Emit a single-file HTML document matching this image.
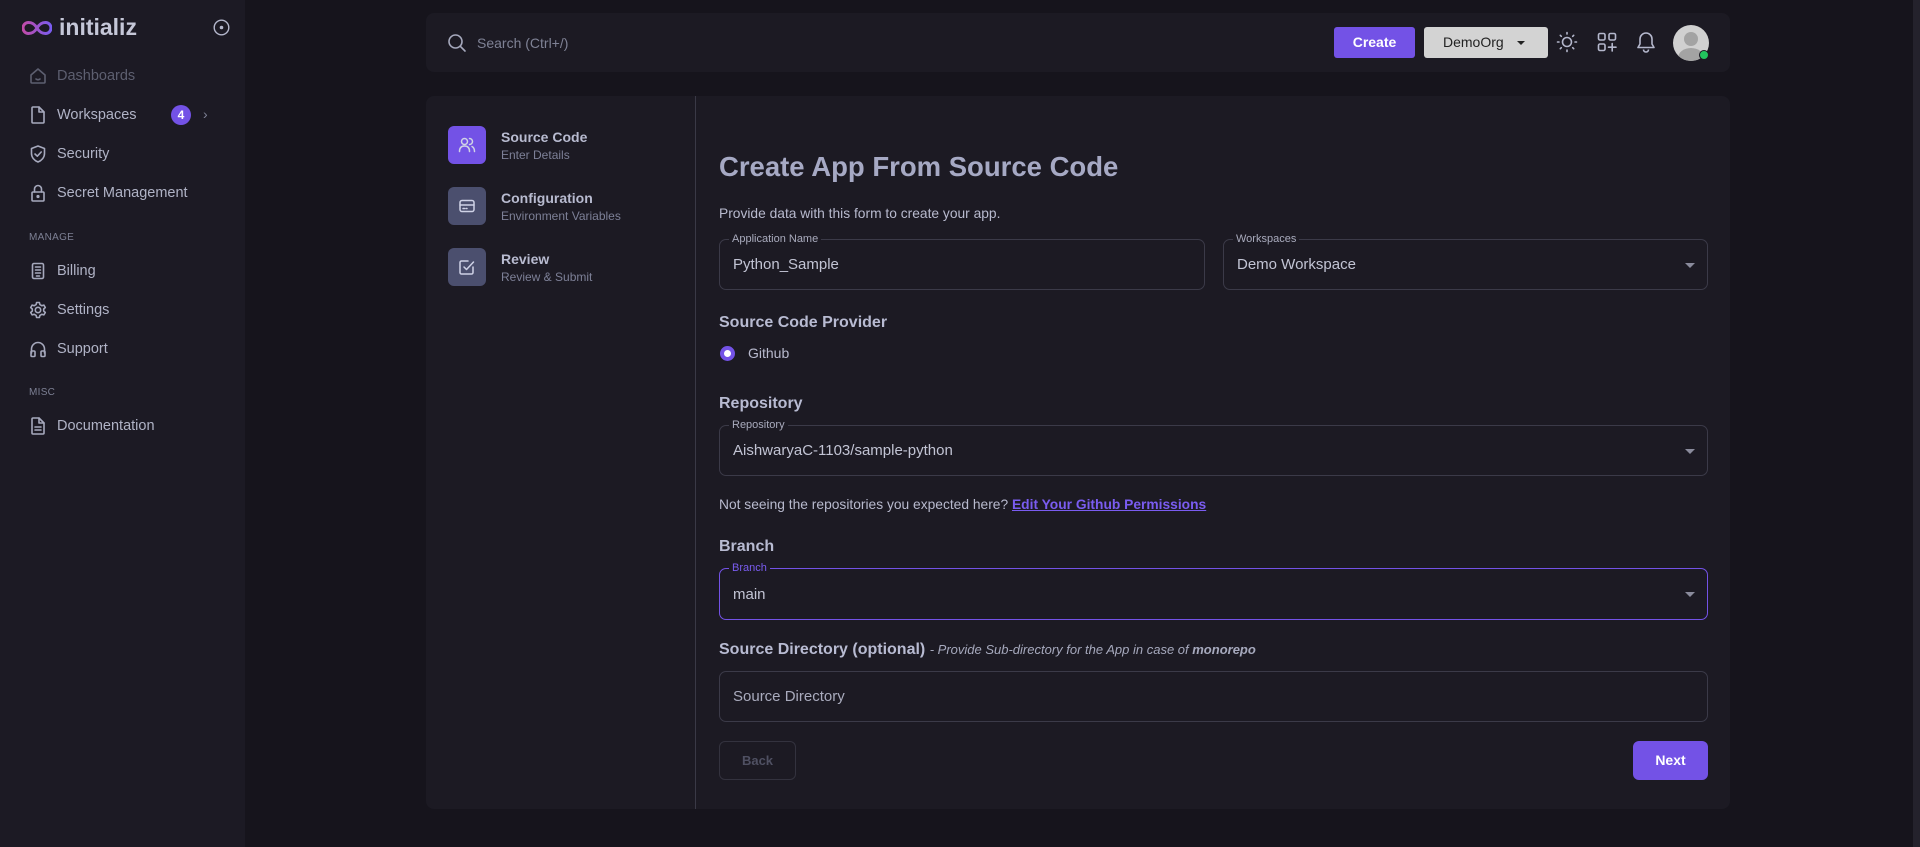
<!DOCTYPE html>
<html><head><meta charset="utf-8"><style>
*{box-sizing:border-box;margin:0;padding:0}
body{width:1920px;height:847px;background:#16141c;font-family:"Liberation Sans",sans-serif;color:#b4b7cc;position:relative;overflow:hidden}
.abs{position:absolute}
.side{left:0;top:0;width:245px;height:847px;background:#1c1a24}
.nav{position:absolute;left:28px;display:flex;align-items:center;font-size:14.5px;color:#b0b3c6}
.nav svg{width:20px;height:20px;margin-right:9px;fill:none;stroke:#a6a9bd;stroke-width:1.6;stroke-linecap:round;stroke-linejoin:round}
.sec{position:absolute;left:29px;font-size:10px;color:#7d8094;letter-spacing:.3px}
.card{background:#1c1a23;border-radius:8px}
.step{position:absolute;left:448px;display:flex;align-items:center}
.step .ic{width:38px;height:38px;border-radius:6px;background:#4b4f6e;display:flex;align-items:center;justify-content:center;margin-right:15px}
.step .ic svg{width:20px;height:20px;fill:none;stroke:#cfd2e6;stroke-width:1.5;stroke-linecap:round;stroke-linejoin:round}
.step b{display:block;font-size:14px;color:#b8bbd0}
.step span{display:block;font-size:12px;color:#7d8097;margin-top:3px}
.field{position:absolute;border:1px solid #3b3a48;border-radius:7px;font-size:15px;color:#c2c4d4;padding-left:13px;display:flex;align-items:center}
.field .lb{position:absolute;top:-8px;left:9px;background:#1c1a23;padding:0 3px;font-size:11px;color:#a9abbd;line-height:14px}
.caret{position:absolute;right:12px;top:50%;margin-top:-2px;border-left:5px solid transparent;border-right:5px solid transparent;border-top:5px solid #8a8b9c}
h3{position:absolute;font-size:16px;font-weight:bold;color:#b8bbd2}
</style></head><body>
<div class="abs side">
  <svg class="abs" style="left:22px;top:20px" width="30" height="16" viewBox="0 0 30 16"><defs><linearGradient id="g" x1="0" x2="1"><stop offset="0" stop-color="#c04ba8"/><stop offset="1" stop-color="#7a5cf0"/></linearGradient></defs><path d="M15 8C12 3 9 2.5 6.5 2.5A5.5 5.5 0 0 0 6.5 13.5C9 13.5 12 13 15 8C18 3 21 2.5 23.5 2.5A5.5 5.5 0 0 1 23.5 13.5C21 13.5 18 13 15 8Z" fill="none" stroke="url(#g)" stroke-width="3"/></svg>
  <div class="abs" style="left:59px;top:14px;font-size:23px;font-weight:bold;color:#c5c7d8">initializ</div>
  <svg class="abs" style="left:213px;top:19px" width="17" height="17" viewBox="0 0 17 17"><circle cx="8.5" cy="8.5" r="7.3" fill="none" stroke="#b4b7cc" stroke-width="1.4"/><circle cx="8.5" cy="8.5" r="1.8" fill="#b4b7cc"/></svg>
  <div class="nav" style="top:66px;color:#5d5f70"><svg viewBox="0 0 20 20" style="stroke:#5d5f70"><path d="M3 9L10 3L17 9V16A1 1 0 0 1 16 17H4A1 1 0 0 1 3 16Z"/><path d="M8 13Q10 14.5 12 13"/></svg>Dashboards</div>
  <div class="nav" style="top:105px"><svg viewBox="0 0 20 20"><path d="M5 2H11L16 7V17A1 1 0 0 1 15 18H5A1 1 0 0 1 4 17V3A1 1 0 0 1 5 2Z"/><path d="M11 2V7H16"/></svg>Workspaces</div>
  <div class="abs" style="left:171px;top:105px;width:20px;height:20px;border-radius:50%;background:#7352e6;color:#fff;font-size:12px;font-weight:bold;text-align:center;line-height:20px">4</div>
  <div class="abs" style="left:203px;top:106px;font-size:14px;color:#7d8094">›</div>
  <div class="nav" style="top:144px"><svg viewBox="0 0 20 20"><path d="M10 2L16.5 4.5V9.5C16.5 13.5 13.5 16.5 10 18C6.5 16.5 3.5 13.5 3.5 9.5V4.5Z"/><path d="M7 10L9.3 12.2L13.2 8"/></svg>Security</div>
  <div class="nav" style="top:183px"><svg viewBox="0 0 20 20"><rect x="4" y="9" width="12" height="9" rx="1"/><path d="M6.5 9V6A3.5 3.5 0 0 1 13.5 6V9"/><circle cx="10" cy="13.5" r=".8" fill="#a6a9bd"/></svg>Secret Management</div>
  <div class="sec" style="top:232px">MANAGE</div>
  <div class="nav" style="top:261px"><svg viewBox="0 0 20 20"><rect x="4.5" y="2.5" width="11" height="15" rx="1.5"/><path d="M7.5 6H12.5M7.5 9H12.5M7.5 12H12.5M8.5 15H11.5"/></svg>Billing</div>
  <div class="nav" style="top:300px"><svg viewBox="0 0 20 20"><circle cx="10" cy="10" r="2.7"/><path d="M8.6 2.5H11.4L11.9 4.6L13.8 5.7L15.9 5.1L17.3 7.5L15.7 9V11L17.3 12.5L15.9 14.9L13.8 14.3L11.9 15.4L11.4 17.5H8.6L8.1 15.4L6.2 14.3L4.1 14.9L2.7 12.5L4.3 11V9L2.7 7.5L4.1 5.1L6.2 5.7L8.1 4.6Z"/></svg>Settings</div>
  <div class="nav" style="top:339px"><svg viewBox="0 0 20 20"><path d="M3.5 14V10A6.5 6.5 0 0 1 16.5 10V14"/><rect x="3" y="12" width="4" height="5.5" rx="1"/><rect x="13" y="12" width="4" height="5.5" rx="1"/></svg>Support</div>
  <div class="sec" style="top:387px">MISC</div>
  <div class="nav" style="top:416px"><svg viewBox="0 0 20 20"><path d="M5 2H11L16 7V17A1 1 0 0 1 15 18H5A1 1 0 0 1 4 17V3A1 1 0 0 1 5 2Z"/><path d="M11 2V7H16M7 11H13M7 14H13"/></svg>Documentation</div>
</div>
<div class="abs" style="left:1913px;top:0;width:7px;height:847px;background:#24222c"></div>

<div class="abs card" style="left:426px;top:13px;width:1304px;height:59px"></div>
<svg class="abs" style="left:447px;top:33px" width="20" height="20" viewBox="0 0 20 20" fill="none" stroke="#a6a9bd" stroke-width="1.6"><circle cx="8.5" cy="8.5" r="6.5"/><path d="M13.3 13.3L18 18" stroke-linecap="round"/></svg>
<div class="abs" style="left:477px;top:35px;font-size:14px;color:#7f8295">Search (Ctrl+/)</div>
<div class="abs" style="left:1334px;top:27px;width:81px;height:31px;background:#7352e6;border-radius:3px;color:#fff;font-weight:bold;font-size:14px;text-align:center;line-height:31px">Create</div>
<div class="abs" style="left:1424px;top:27px;width:124px;height:31px;background:#d3d3d3;border-radius:3px;color:#222;font-size:14px;line-height:31px;padding-left:19px">DemoOrg<span style="position:absolute;right:23px;top:14px;border-left:4px solid transparent;border-right:4px solid transparent;border-top:4px solid #222"></span></div>
<svg class="abs" style="left:1556px;top:31px" width="22" height="22" viewBox="0 0 22 22" fill="none" stroke="#b4b7cc" stroke-width="1.6" stroke-linecap="round"><circle cx="11" cy="11" r="4.5"/><path d="M11 1.5V3M11 19V20.5M1.5 11H3M19 11H20.5M4.3 4.3L5.3 5.3M16.7 16.7L17.7 17.7M4.3 17.7L5.3 16.7M16.7 5.3L17.7 4.3"/></svg>
<svg class="abs" style="left:1597px;top:32px" width="20" height="20" viewBox="0 0 20 20" fill="none" stroke="#b4b7cc" stroke-width="1.6" stroke-linecap="round"><rect x="1.5" y="1.5" width="6.5" height="6.5" rx="1.5"/><rect x="12" y="1.5" width="6.5" height="6.5" rx="1.5"/><rect x="1.5" y="12" width="6.5" height="6.5" rx="1.5"/><path d="M15.2 11.5V19M11.5 15.2H19"/></svg>
<svg class="abs" style="left:1636px;top:31px" width="20" height="22" viewBox="0 0 20 22" fill="none" stroke="#b4b7cc" stroke-width="1.6" stroke-linejoin="round"><path d="M10 2A6 6 0 0 0 4 8V13L2 16.5H18L16 13V8A6 6 0 0 0 10 2Z"/><path d="M7.5 18.5A2.5 2.5 0 0 0 12.5 18.5"/></svg>
<div class="abs" style="left:1673px;top:25px;width:36px;height:36px;border-radius:50%;background:#d0d0d0;overflow:hidden"><div class="abs" style="left:11px;top:7px;width:14px;height:14px;border-radius:50%;background:#a3a3a3"></div><div class="abs" style="left:5px;top:23px;width:26px;height:20px;border-radius:50%;background:#a3a3a3"></div></div>
<div class="abs" style="left:1699px;top:50px;width:10px;height:10px;border-radius:50%;background:#22c55e;border:1.5px solid #1c1a23"></div>

<div class="abs card" style="left:426px;top:96px;width:1304px;height:713px"></div>
<div class="abs" style="left:695px;top:96px;width:1px;height:713px;background:#3a3946"></div>
<div class="step" style="top:126px"><div class="ic" style="background:#7352e6"><svg viewBox="0 0 20 20"><circle cx="7.5" cy="6.5" r="3"/><path d="M2.5 16.5C2.5 12.5 4.5 11 7.5 11S12.5 12.5 12.5 16.5"/><path d="M12.5 3.5A3 3 0 0 1 12.5 9.5M15 11.5C16.5 12.3 17.5 14 17.5 16.5"/></svg></div><div><b>Source Code</b><span>Enter Details</span></div></div>
<div class="step" style="top:187px"><div class="ic"><svg viewBox="0 0 20 20"><rect x="3" y="4.5" width="14" height="11" rx="2"/><path d="M3 9H17M6 12.5H7.5M9 12.5H10"/></svg></div><div><b>Configuration</b><span>Environment Variables</span></div></div>
<div class="step" style="top:248px"><div class="ic"><svg viewBox="0 0 20 20"><path d="M16 10V15.5A1.5 1.5 0 0 1 14.5 17H4.5A1.5 1.5 0 0 1 3 15.5V5.5A1.5 1.5 0 0 1 4.5 4H11"/><path d="M7 10L9.5 12.5L16.5 5"/></svg></div><div><b>Review</b><span>Review &amp; Submit</span></div></div>

<div class="abs" style="left:719px;top:151px;font-size:27.5px;font-weight:bold;color:#a6a9c4">Create App From Source Code</div>
<div class="abs" style="left:719px;top:206px;font-size:13.8px;color:#b8bace">Provide data with this form to create your app.</div>
<div class="field" style="left:719px;top:239px;width:486px;height:51px"><span class="lb">Application Name</span>Python_Sample</div>
<div class="field" style="left:1223px;top:239px;width:485px;height:51px"><span class="lb">Workspaces</span>Demo Workspace<span class="caret"></span></div>
<h3 style="left:719px;top:314px">Source Code Provider</h3>
<div class="abs" style="left:720px;top:346px;width:15px;height:15px;border-radius:50%;background:#7352e6"><div class="abs" style="left:4px;top:4px;width:7px;height:7px;border-radius:50%;background:#fff"></div></div>
<div class="abs" style="left:748px;top:345px;font-size:14px;color:#b8bace">Github</div>
<h3 style="left:719px;top:395px">Repository</h3>
<div class="field" style="left:719px;top:425px;width:989px;height:51px"><span class="lb">Repository</span>AishwaryaC-1103/sample-python<span class="caret"></span></div>
<div class="abs" style="left:719px;top:497px;font-size:13.8px;color:#b8bace">Not seeing the repositories you expected here? <span style="color:#7a5cf0;font-weight:bold;text-decoration:underline">Edit Your Github Permissions</span></div>
<h3 style="left:719px;top:538px">Branch</h3>
<div class="field" style="left:719px;top:568px;width:989px;height:52px;border-color:#7352e6"><span class="lb" style="color:#7a5cf0">Branch</span>main<span class="caret"></span></div>
<div class="abs" style="left:719px;top:641px;font-size:16px;font-weight:bold;color:#b8bbd2">Source Directory (optional) <span style="font-size:13px;font-weight:normal;font-style:italic;color:#a6a9bd">- Provide Sub-directory for the App in case of <b>monorepo</b></span></div>
<div class="field" style="left:719px;top:671px;width:989px;height:51px;color:#a9abbd">Source Directory</div>
<div class="abs" style="left:719px;top:741px;width:77px;height:39px;border:1px solid #33323e;border-radius:6px;font-size:13px;font-weight:bold;color:#4f5062;text-align:center;line-height:37px">Back</div>
<div class="abs" style="left:1633px;top:741px;width:75px;height:39px;background:#7352e6;border-radius:6px;font-size:14px;font-weight:bold;color:#fff;text-align:center;line-height:39px">Next</div>
</body></html>
